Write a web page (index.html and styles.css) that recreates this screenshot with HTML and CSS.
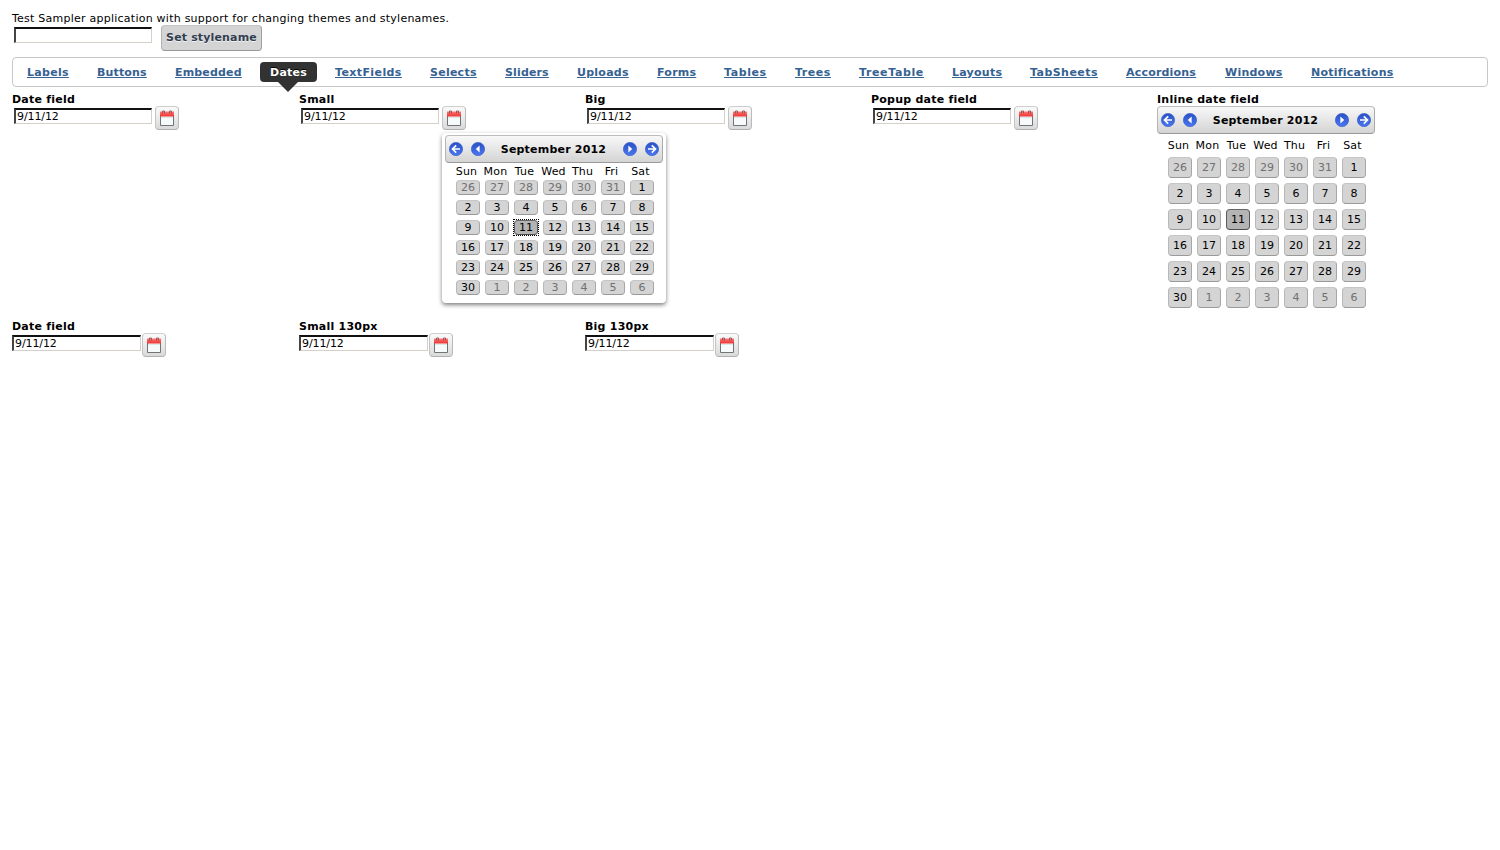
FILE: index.html
```
<!DOCTYPE html>
<html lang="en">
<head>
<meta charset="utf-8">
<title>Test Sampler</title>
<link rel="stylesheet" href="styles.css">
</head>
<body>
<svg class="defs" width="0" height="0">
  <defs>
    <linearGradient id="blue" x1="0" y1="0" x2="0" y2="1"><stop offset="0" stop-color="#2a4fc4"/><stop offset="1" stop-color="#4a78f2"/></linearGradient>
    <linearGradient id="red" x1="0" y1="0" x2="0" y2="1"><stop offset="0" stop-color="#ff7a7a"/><stop offset="1" stop-color="#ee3030"/></linearGradient>
  </defs>
  <symbol id="disc" viewBox="0 0 14 14"><circle cx="7" cy="7" r="6.6" fill="url(#blue)" stroke="#4468cc" stroke-width=".8"/></symbol>
  <symbol id="arrow" viewBox="0 0 14 14"><use href="#disc"/><path d="M11 7H4M7.2 3.3L3.5 7L7.2 10.7" fill="none" stroke="#fff" stroke-width="1.7"/></symbol>
  <symbol id="tri" viewBox="0 0 14 14"><use href="#disc"/><path d="M8.6 3.5V10.5L4.8 7Z" fill="#fff"/></symbol>
  <symbol id="cal" viewBox="0 0 16 16"><path d="M1.5 6V15.5H14.5V6" fill="#f6fafa" stroke="#6f7474"/><path d="M1 1.5H15V6.5H1Z" fill="url(#red)"/><path d="M3.5 3.5V1H5.5V3.5M10.5 3.5V1H12.5V3.5" fill="none" stroke="#8c5050" stroke-width=".9"/><path d="M2 7.5H14" stroke="#dce9e9"/></symbol>
</svg>
<div class="intro">Test Sampler application with support for changing themes and stylenames.</div>
<div class="tools"><input class="field" aria-label="Stylename"><button class="set">Set stylename</button></div>
<nav class="tabs">
  <a>Labels</a><a>Buttons</a><a>Embedded</a><a class="active">Dates</a><a>TextFields</a><a>Selects</a><a>Sliders</a><a>Uploads</a><a>Forms</a><a>Tables</a><a>Trees</a><a>TreeTable</a><a>Layouts</a><a>TabSheets</a><a>Accordions</a><a>Windows</a><a>Notifications</a>
</nav>
<main class="grid">
  <section><h2>Date field</h2><div class="date"><input class="field" value="9/11/12"><button class="pick"><svg><use href="#cal"/></svg></button></div></section>
  <section><h2>Small</h2><div class="date"><input class="field" value="9/11/12"><button class="pick"><svg><use href="#cal"/></svg></button></div><div class="popup calendar"></div></section>
  <section><h2>Big</h2><div class="date"><input class="field" value="9/11/12"><button class="pick"><svg><use href="#cal"/></svg></button></div></section>
  <section><h2>Popup date field</h2><div class="date"><input class="field" value="9/11/12"><button class="pick"><svg><use href="#cal"/></svg></button></div></section>
  <section><h2>Inline date field</h2><div class="inline calendar"></div></section>
  <section><h2>Date field</h2><div class="date sized"><input class="field" value="9/11/12"><button class="pick"><svg><use href="#cal"/></svg></button></div></section>
  <section><h2>Small 130px</h2><div class="date sized"><input class="field" value="9/11/12"><button class="pick"><svg><use href="#cal"/></svg></button></div></section>
  <section><h2>Big 130px</h2><div class="date sized"><input class="field" value="9/11/12"><button class="pick"><svg><use href="#cal"/></svg></button></div></section>
</main>
<script src="calendar.js"></script>
</body>
</html>
```
FILE: styles.css
```
* { box-sizing: border-box; }
body { margin: 0; padding: 11px 12px 0; height: 850px; overflow: hidden; background: #fff; color: #000; font: 11px/15px "DejaVu Sans", sans-serif; }
.defs { position: absolute; }
.intro { height: 14px; letter-spacing: .24px; white-space: nowrap; }
.tools { display: flex; align-items: flex-start; height: 32px; padding-left: 2px; }
.field { display: block; width: 138px; height: 16px; margin: 2px 0 0; padding: 0 0 0 1px; border: solid; border-width: 2px 1px 1px 2px; border-color: #111 #d4d0c8 #d4d0c8 #444; background: #fff; color: #000; font: 11px/13px "DejaVu Sans", sans-serif; letter-spacing: -.1px; outline: 0; }
.set { width: 101px; height: 26px; margin-left: 9px; padding: 0 0 2px; border: 1px solid; border-color: #c4c4c4 #a0a0a0 #989898 #b4b4b4; border-radius: 4px; background: #d4d4d4; color: #323e50; font: bold 11px/15px "DejaVu Sans", sans-serif; letter-spacing: .15px; white-space: nowrap; text-shadow: 0 1px 0 #f2f2f2; }
.tabs { display: flex; gap: 8px; height: 30px; padding: 4px; border: 1px solid #c6c8c8; border-radius: 4px; font-weight: bold; letter-spacing: .25px; }
.tabs a { flex: none; height: 20px; padding: 3px 10px 2px; color: #366292; text-decoration: underline; white-space: nowrap; }
.tabs a:nth-child(1) { width: 62px; letter-spacing: .3px; }
.tabs a:nth-child(2) { width: 70px; letter-spacing: .15px; }
.tabs a:nth-child(3) { width: 87px; letter-spacing: .17px; }
.tabs a:nth-child(4) { width: 57px; }
.tabs a:nth-child(5) { width: 87px; letter-spacing: .4px; }
.tabs a:nth-child(6) { width: 67px; }
.tabs a:nth-child(7) { width: 64px; letter-spacing: .15px; }
.tabs a:nth-child(8) { width: 72px; }
.tabs a:nth-child(9) { width: 59px; }
.tabs a:nth-child(10) { width: 63px; letter-spacing: .6px; }
.tabs a:nth-child(11) { width: 56px; letter-spacing: .55px; }
.tabs a:nth-child(12) { width: 85px; letter-spacing: .63px; }
.tabs a:nth-child(13) { width: 70px; }
.tabs a:nth-child(14) { width: 88px; letter-spacing: .45px; }
.tabs a:nth-child(15) { width: 91px; letter-spacing: .2px; }
.tabs a:nth-child(16) { width: 78px; }
.tabs a:nth-child(17) { width: 102px; }
.tabs .active { position: relative; background: #323232; color: #fff; border-radius: 4px; text-decoration: none; text-shadow: 0 -1px 0 #000; }
.active::after { content: ""; position: absolute; left: 18px; top: 20px; border: solid transparent; border-width: 10px 10px 0; border-top-color: #323232; }
.grid { display: grid; grid-template-columns: 287px 286px 286px 286px 1fr; grid-template-rows: 227px auto; padding-top: 5px; }
.grid section { position: relative; }
h2 { height: 14px; margin: 0; font: bold 11px/15px "DejaVu Sans", sans-serif; letter-spacing: .23px; }
.date { display: flex; padding-left: 2px; }
.pick { width: 24px; height: 24px; margin-left: 3px; padding: 3px; border: 1px solid; border-color: #cecece #bababa #b0b0b0 #c4c4c4; border-radius: 4px; background: linear-gradient(#fafafa, #dadada); }
.pick svg { display: block; width: 16px; height: 16px; }
.sized { padding-left: 0; }
.sized .field { width: 129px; }
.sized .pick { margin-left: 1px; }
.popup { position: absolute; z-index: 2; left: 143px; top: 41px; width: 224px; height: 170px; padding: 2px 3px; border-radius: 4px; background: #fff; box-shadow: 0 2px 4px rgba(0,0,0,.5); }
.calendar header { display: flex; align-items: center; width: 218px; height: 28px; padding: 0 3px; border: 1px solid; border-color: #bdbdbd #aaa #999 #b5b5b5; border-radius: 4px; background: linear-gradient(#f8f8f8, #d4d4d4); }
.calendar header svg { width: 14px; height: 14px; margin-right: 8px; }
.calendar header .next { margin: 0 0 0 8px; transform: scaleX(-1); }
.calendar header strong { flex: 1; padding-right: 1px; text-align: center; letter-spacing: .2px; }
.days { display: grid; grid-template-columns: repeat(7, 24px); column-gap: 5px; padding-left: 11px; text-align: center; }
.weekday { display: flex; justify-content: center; width: 21px; white-space: nowrap; letter-spacing: .2px; }
.day { position: relative; border: 1px solid; border-color: #c5c5c5 #a7a7a7 #999 #b8b8b8; border-radius: 4px; background: #d4d4d4; }
.day.off { color: #707070; }
.day.selected { border-color: #666 #555 #4c4c4c #5c5c5c; background: #b4b4b4; }
.popup .days { grid-template-rows: 16px repeat(6, 20px); padding-top: 1px; }
.popup .day { height: 15px; line-height: 14px; }
.popup .selected::after { content: ""; position: absolute; inset: -2px; border: 1px dotted #000; }
.inline .days { grid-template-rows: 19px repeat(6, 26px); padding-top: 4px; }
.inline .day { height: 21px; line-height: 19px; }
```
FILE: calendar.js
```
const names = ["Sun", "Mon", "Tue", "Wed", "Thu", "Fri", "Sat"];
document.querySelectorAll(".calendar").forEach(calendar => {
  let html = '<header><svg><use href="#arrow"/></svg><svg><use href="#tri"/></svg><strong>September 2012</strong><svg class="next"><use href="#tri"/></svg><svg class="next"><use href="#arrow"/></svg></header><div class="days">';
  names.forEach(name => { html += `<span class="weekday">${name}</span>`; });
  for (let i = 0; i < 42; i++) {
    const date = new Date(2012, 7, 26 + i);
    const off = date.getMonth() !== 8;
    const selected = !off && date.getDate() === 11;
    html += `<span class="day${off ? " off" : ""}${selected ? " selected" : ""}">${date.getDate()}</span>`;
  }
  calendar.innerHTML = html + "</div>";
});
```
